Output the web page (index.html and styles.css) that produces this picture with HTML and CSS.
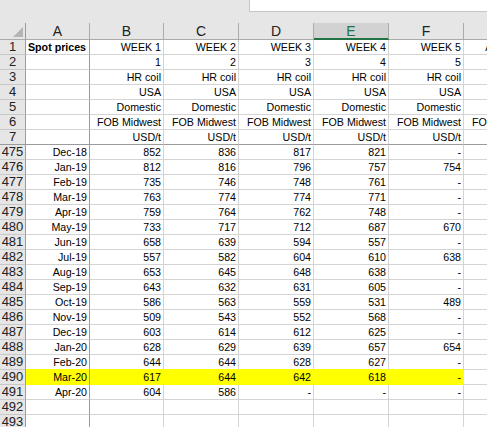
FILE: index.html
```html
<!DOCTYPE html>
<html>
<head>
<meta charset="utf-8">
<link rel="stylesheet" href="styles.css">
</head>
<body>
<div class="app">
  <div class="topbar"><div class="formula"></div></div>
  <div class="sheet">
    <div class="row colhead">
      <div class="hc corner"><svg width="10" height="10" viewBox="0 0 10 10"><polygon points="10,0 10,10 0,10" fill="#b4b4b4"/></svg></div>
      <div class="hc">A</div><div class="hc">B</div><div class="hc">C</div><div class="hc">D</div><div class="hc sel">E</div><div class="hc">F</div><div class="hc">G</div>
    </div>
    <div class="row"><div class="rh">1</div><div class="c a l b">Spot prices</div><div class="c">WEEK 1</div><div class="c">WEEK 2</div><div class="c">WEEK 3</div><div class="c">WEEK 4</div><div class="c">WEEK 5</div><div class="c">AVERAGE</div></div>
    <div class="row"><div class="rh">2</div><div class="c a"></div><div class="c">1</div><div class="c">2</div><div class="c">3</div><div class="c">4</div><div class="c">5</div><div class="c"></div></div>
    <div class="row"><div class="rh">3</div><div class="c a"></div><div class="c">HR coil</div><div class="c">HR coil</div><div class="c">HR coil</div><div class="c">HR coil</div><div class="c">HR coil</div><div class="c"></div></div>
    <div class="row"><div class="rh">4</div><div class="c a"></div><div class="c">USA</div><div class="c">USA</div><div class="c">USA</div><div class="c">USA</div><div class="c">USA</div><div class="c"></div></div>
    <div class="row"><div class="rh">5</div><div class="c a"></div><div class="c">Domestic</div><div class="c">Domestic</div><div class="c">Domestic</div><div class="c">Domestic</div><div class="c">Domestic</div><div class="c"></div></div>
    <div class="row"><div class="rh">6</div><div class="c a"></div><div class="c">FOB Midwest</div><div class="c">FOB Midwest</div><div class="c">FOB Midwest</div><div class="c">FOB Midwest</div><div class="c">FOB Midwest</div><div class="c">FOB Midwest</div></div>
    <div class="row frz"><div class="rh">7</div><div class="c a"></div><div class="c">USD/t</div><div class="c">USD/t</div><div class="c">USD/t</div><div class="c">USD/t</div><div class="c">USD/t</div><div class="c"></div></div>
    <div class="row"><div class="rh">475</div><div class="c a">Dec-18</div><div class="c">852</div><div class="c">836</div><div class="c">817</div><div class="c">821</div><div class="c">-</div><div class="c"></div></div>
    <div class="row"><div class="rh">476</div><div class="c a">Jan-19</div><div class="c">812</div><div class="c">816</div><div class="c">796</div><div class="c">757</div><div class="c">754</div><div class="c"></div></div>
    <div class="row"><div class="rh">477</div><div class="c a">Feb-19</div><div class="c">735</div><div class="c">746</div><div class="c">748</div><div class="c">761</div><div class="c">-</div><div class="c"></div></div>
    <div class="row"><div class="rh">478</div><div class="c a">Mar-19</div><div class="c">763</div><div class="c">774</div><div class="c">774</div><div class="c">771</div><div class="c">-</div><div class="c"></div></div>
    <div class="row"><div class="rh">479</div><div class="c a">Apr-19</div><div class="c">759</div><div class="c">764</div><div class="c">762</div><div class="c">748</div><div class="c">-</div><div class="c"></div></div>
    <div class="row"><div class="rh">480</div><div class="c a">May-19</div><div class="c">733</div><div class="c">717</div><div class="c">712</div><div class="c">687</div><div class="c">670</div><div class="c"></div></div>
    <div class="row"><div class="rh">481</div><div class="c a">Jun-19</div><div class="c">658</div><div class="c">639</div><div class="c">594</div><div class="c">557</div><div class="c">-</div><div class="c"></div></div>
    <div class="row"><div class="rh">482</div><div class="c a">Jul-19</div><div class="c">557</div><div class="c">582</div><div class="c">604</div><div class="c">610</div><div class="c">638</div><div class="c"></div></div>
    <div class="row"><div class="rh">483</div><div class="c a">Aug-19</div><div class="c">653</div><div class="c">645</div><div class="c">648</div><div class="c">638</div><div class="c">-</div><div class="c"></div></div>
    <div class="row"><div class="rh">484</div><div class="c a">Sep-19</div><div class="c">643</div><div class="c">632</div><div class="c">631</div><div class="c">605</div><div class="c">-</div><div class="c"></div></div>
    <div class="row"><div class="rh">485</div><div class="c a">Oct-19</div><div class="c">586</div><div class="c">563</div><div class="c">559</div><div class="c">531</div><div class="c">489</div><div class="c"></div></div>
    <div class="row"><div class="rh">486</div><div class="c a">Nov-19</div><div class="c">509</div><div class="c">543</div><div class="c">552</div><div class="c">568</div><div class="c">-</div><div class="c"></div></div>
    <div class="row"><div class="rh">487</div><div class="c a">Dec-19</div><div class="c">603</div><div class="c">614</div><div class="c">612</div><div class="c">625</div><div class="c">-</div><div class="c"></div></div>
    <div class="row"><div class="rh">488</div><div class="c a">Jan-20</div><div class="c">628</div><div class="c">629</div><div class="c">639</div><div class="c">657</div><div class="c">654</div><div class="c"></div></div>
    <div class="row pre"><div class="rh">489</div><div class="c a">Feb-20</div><div class="c">644</div><div class="c">644</div><div class="c">628</div><div class="c">627</div><div class="c">-</div><div class="c g"></div></div>
    <div class="row hl"><div class="rh">490</div><div class="c a">Mar-20</div><div class="c">617</div><div class="c">644</div><div class="c">642</div><div class="c">618</div><div class="c">-</div><div class="c g"></div></div>
    <div class="row"><div class="rh">491</div><div class="c a">Apr-20</div><div class="c">604</div><div class="c">586</div><div class="c">-</div><div class="c">-</div><div class="c">-</div><div class="c"></div></div>
    <div class="row"><div class="rh">492</div><div class="c a"></div><div class="c"></div><div class="c"></div><div class="c"></div><div class="c"></div><div class="c"></div><div class="c"></div></div>
    <div class="row"><div class="rh">493</div><div class="c a"></div><div class="c"></div><div class="c"></div><div class="c"></div><div class="c"></div><div class="c"></div><div class="c"></div></div>
  </div>
</div>
</body>
</html>
```

FILE: styles.css
```css
html, body {
  margin: 0;
  padding: 0;
  background: #ffffff;
  overflow: hidden;
}

.app {
  width: 487px;
  height: 427px;
  overflow: hidden;
  font-family: "Liberation Sans", Arial, sans-serif;
}

.topbar {
  height: 23px;
  background: #e6e6e6;
  display: flex;
  align-items: flex-start;
}

.formula {
  margin-left: 249px;
  flex: 1;
  height: 12px;
  box-sizing: border-box;
  background: #ffffff;
  border-left: 1px solid #c6c6c6;
  border-bottom: 1px solid #c6c6c6;
}

.sheet {
  width: 539px;
}

.row {
  display: grid;
  grid-template-columns: 26px 64px 74px 75px 75px 75px 75px 75px;
  height: 15px;
}

.row > div {
  box-sizing: border-box;
  overflow: hidden;
  white-space: nowrap;
}

.colhead {
  height: 17px;
}

.hc {
  background: #e6e6e6;
  border-right: 1px solid #ababab;
  border-bottom: 1px solid #ababab;
  color: #222222;
  font-size: 14px;
  line-height: 16px;
  text-align: center;
}

.hc.corner {
  display: flex;
  justify-content: flex-end;
  align-items: flex-end;
  padding: 0 2px 2px 0;
  border-right-color: #9b9b9b;
}

.hc.corner svg {
  display: block;
}

.hc.sel {
  background: #d2d2d2;
  color: #217346;
  border-bottom: 2px solid #217346;
}

.rh {
  background: #e6e6e6;
  border-right: 1px solid #9b9b9b;
  border-bottom: 1px solid #c8c8c8;
  color: #222222;
  font-size: 13px;
  line-height: 12px;
  text-align center;
  text-align: center;
  padding-top: 1px;
}

.c {
  border-right: 1px solid #d4d4d4;
  border-bottom: 1px solid #d4d4d4;
  font-size: 10.67px;
  line-height: 14px;
  text-align: right;
  padding: 0 2px;
  color: #000000;
}

.c.a {
  border-right-color: #9b9b9b;
}

.c.l {
  text-align: left;
}

.c.b {
  font-weight: bold;
}

.frz > div {
  border-bottom-color: #9b9b9b;
}

.pre > .c {
  border-bottom-color: #ffff00;
}

.hl > .c {
  background: #ffff00;
  border-right-color: #ffff00;
  border-bottom-color: #ffff00;
}

.hl > .c.a {
  border-right-color: #9b9b9b;
}

.pre > .c.g {
  border-bottom-color: #d4d4d4;
}

.hl > .c.g {
  background: #ffffff;
  border-right-color: #d4d4d4;
  border-bottom-color: #d4d4d4;
}
```
